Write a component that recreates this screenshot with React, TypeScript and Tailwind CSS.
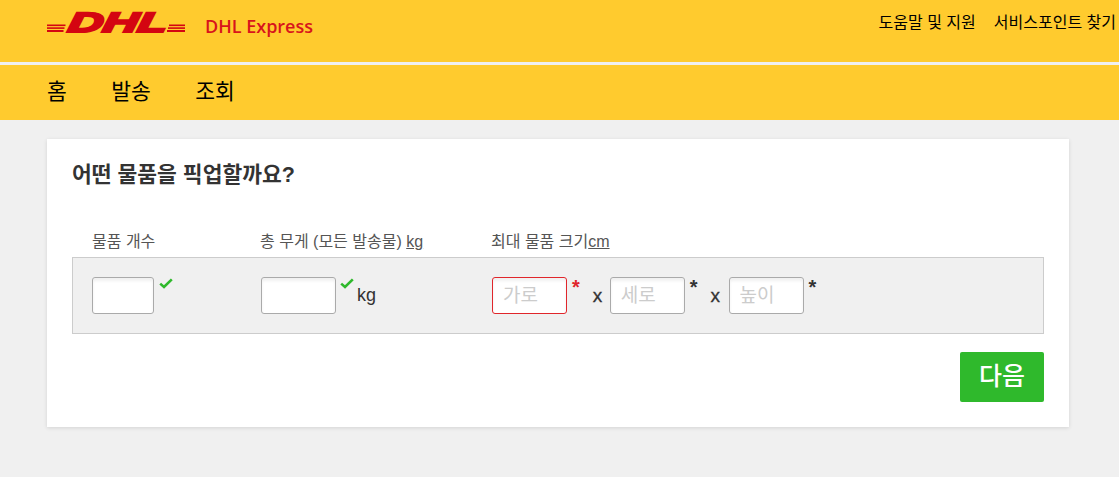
import React from "react";

const font = { fontFamily: '"Liberation Sans", "Noto Sans CJK KR", sans-serif' };

function Check({ className }: { className: string }) {
  return (
    <svg viewBox="0 0 14 11" className={className} fill="none">
      <path d="M1.2 5.6 L5 9 L12.8 1.4" stroke="#2fb92c" strokeWidth="2.6" />
    </svg>
  );
}

function Logo() {
  const stripes: number[][] = [
    [0, 18.5, 14.5, 1.6],
    [0, 17.5, 17.3, 1.6],
    [0, 16.5, 20, 2],
    [122, 138, 14.5, 1.6],
    [121, 138, 17.3, 1.6],
    [120, 138, 20, 2],
  ];
  return (
    <svg width="138" height="24" viewBox="0 0 138 24" className="block overflow-visible">
      {stripes.map(([a, b, y, h], i) => (
        <rect key={i} x={a} y={y} width={b - a} height={h} fill="#d40511" />
      ))}
      <g transform="translate(20 22) skewX(-10)">
        <text
          x="0"
          y="0"
          textLength="99"
          lengthAdjust="spacingAndGlyphs"
          fontFamily="Liberation Sans"
          fontWeight="700"
          fontStyle="italic"
          fontSize="28"
          fill="#d40511"
          stroke="#d40511"
          strokeWidth="2.2"
        >
          DHL
        </text>
      </g>
    </svg>
  );
}

function Field({ w, placeholder, invalid }: { w: string; placeholder?: string; invalid?: boolean }) {
  return (
    <input
      placeholder={placeholder}
      className={`${w} h-[37px] shrink-0 rounded-[3px] border bg-white px-2.5 text-[19px] shadow-[inset_0_3px_3px_rgba(0,0,0,0.06)] outline-none placeholder:text-[#ccc] ${
        invalid ? "border-[#e0262b]" : "border-[#aaa]"
      }`}
    />
  );
}

export default function App() {
  return (
    <div className="h-[477px] overflow-hidden bg-[#f0f0f0]" style={font}>
      <header className="flex h-[62px] items-start justify-between bg-[#ffcb2e] pl-[47px] pr-[3px]">
        <div className="flex items-start pt-[10px]">
          <Logo />
          <span className="ml-[20px] mt-[4px] font-['Open_Sans'] text-[18px] font-semibold leading-6 text-[#d8141c]">
            DHL Express
          </span>
        </div>
        <nav className="flex gap-[18px] pt-[13px] text-base leading-5 text-black">
          <span>도움말 및 지원</span>
          <span>서비스포인트 찾기</span>
        </nav>
      </header>
      <nav className="mt-[3px] flex h-[55px] items-center gap-[44.5px] bg-[#ffcb2e] pl-[47px] text-[21.5px] text-black">
        <span>홈</span>
        <span>발송</span>
        <span>조회</span>
      </nav>
      <main className="ml-[47px] mt-[19px] h-[288px] w-[1022px] bg-white px-[25px] pt-[22px] shadow-[0_1px_4px_rgba(0,0,0,0.12)]">
        <h1 className="text-[21.5px] font-bold leading-[28px] text-[#333]">어떤 물품을 픽업할까요?</h1>
        <div className="mt-[36px] flex h-[32px] items-center pt-[2px] text-base text-[#555]">
          <span className="ml-[20px] w-[168px]">물품 개수</span>
          <span className="w-[231px]">
            총 무게 (모든 발송물) <u>kg</u>
          </span>
          <span>
            최대 물품 크기<u>cm</u>
          </span>
        </div>
        <div className="flex h-[77px] items-start border border-[#ccc] bg-[#f0f0f0] pl-[19px] pt-[19px] text-[#333]">
          <Field w="w-[62px]" />
          <Check className="ml-[5px] mt-[1px] h-[11px] w-[14px] shrink-0" />
          <Field w="ml-[88px] w-[75px]" />
          <Check className="ml-[4px] mt-[1px] h-[11px] w-[14px] shrink-0" />
          <span className="ml-[3px] mt-[8px] text-lg leading-5">kg</span>
          <Field w="ml-[116px] w-[75px]" placeholder="가로" invalid />
          <span className="ml-[5px] text-xl font-bold leading-5 text-[#e0262b]">*</span>
          <span className="ml-[13px] mt-[9px] w-[10px] text-[19px] leading-5 [-webkit-text-stroke:0.3px_#333]">x</span>
          <Field w="ml-[7px] w-[75px]" placeholder="세로" />
          <span className="ml-[5px] text-xl font-bold leading-5">*</span>
          <span className="ml-[13px] mt-[9px] w-[10px] text-[19px] leading-5 [-webkit-text-stroke:0.3px_#333]">x</span>
          <Field w="ml-[8px] w-[75px]" placeholder="높이" />
          <span className="ml-[5px] text-xl font-bold leading-5">*</span>
        </div>
        <div className="mt-[18px] flex justify-end">
          <button className="h-[50px] w-[84px] rounded-[2px] bg-[#2fb92c] text-[25px] font-medium text-white">다음</button>
        </div>
      </main>
    </div>
  );
}
